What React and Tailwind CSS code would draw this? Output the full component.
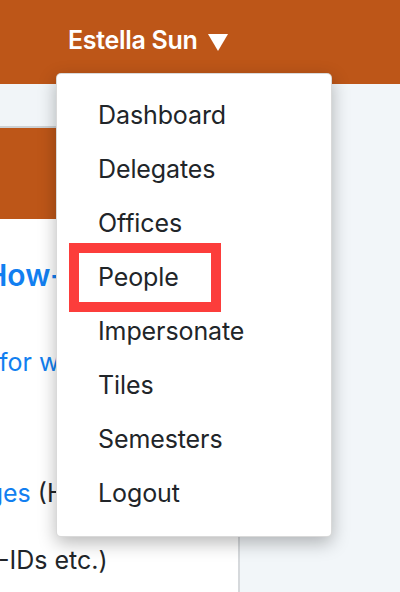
import React from "react";

const items = ["Dashboard", "Delegates", "Offices", "People", "Impersonate", "Tiles", "Semesters", "Logout"];

export default function App() {
  return (
    <div className="relative w-[400px] h-[592px] overflow-hidden bg-[#f2f6f9] text-[#212529] font-['Inter','Liberation_Sans',sans-serif]">
      {/* top bar */}
      <header className="h-[84px] bg-[#bd5618] flex items-center pl-[68px] pb-[2px]">
        <span className="text-white text-[25px] font-semibold tracking-[-0.3px]">Estella Sun</span>
        <svg width="22" height="20" viewBox="0 0 22 20" className="ml-[9px] mt-[1px]">
          <path d="M1 2 H21 L11 19 Z" fill="#fff" />
        </svg>
      </header>

      <div className="flex h-[508px]">
        {/* left column */}
        <div className="w-[240px] bg-white border-r-2 border-[#d6d9dc] overflow-hidden">
          <div className="h-[44px] bg-[#f1f5f8] border-b-2 border-[#cdd1d4]" />
          <div className="h-[91px] bg-[#bd5618]" />
          <div className="mt-[38px] -ml-[15px] whitespace-nowrap text-[30px] leading-[36px] font-semibold text-[#127ff0]">
            How-to guides
          </div>
          <div className="mt-[51px] -ml-[1px] whitespace-nowrap text-[25px] leading-[36px] text-[#127ff0]">
            for web editors
          </div>
          <div className="mt-[95px] -ml-[55px] whitespace-nowrap text-[25px] leading-[36px]">
            <span className="text-[#127ff0]">Images</span> (Headshots,
          </div>
          <div className="mt-[31px] -ml-[2px] whitespace-nowrap text-[25px] leading-[36px]">
            -IDs etc.)
          </div>
        </div>
        <div className="flex-1" />
      </div>

      {/* dropdown menu */}
      <div className="absolute left-[56px] top-[73px] w-[276px] bg-white rounded-[5px] border border-black/15 shadow-[0_6px_18px_rgba(0,0,0,0.28)] py-[15px]">
        {items.map((item) => (
          <div key={item} className="h-[54px] flex items-center pl-[41px] text-[25px] tracking-[-0.1px]">
            {item}
          </div>
        ))}
        <div className="absolute left-[12px] top-[169px] w-[152px] h-[69px] border-[10px] border-[#fc3d3b]" />
      </div>
    </div>
  );
}
